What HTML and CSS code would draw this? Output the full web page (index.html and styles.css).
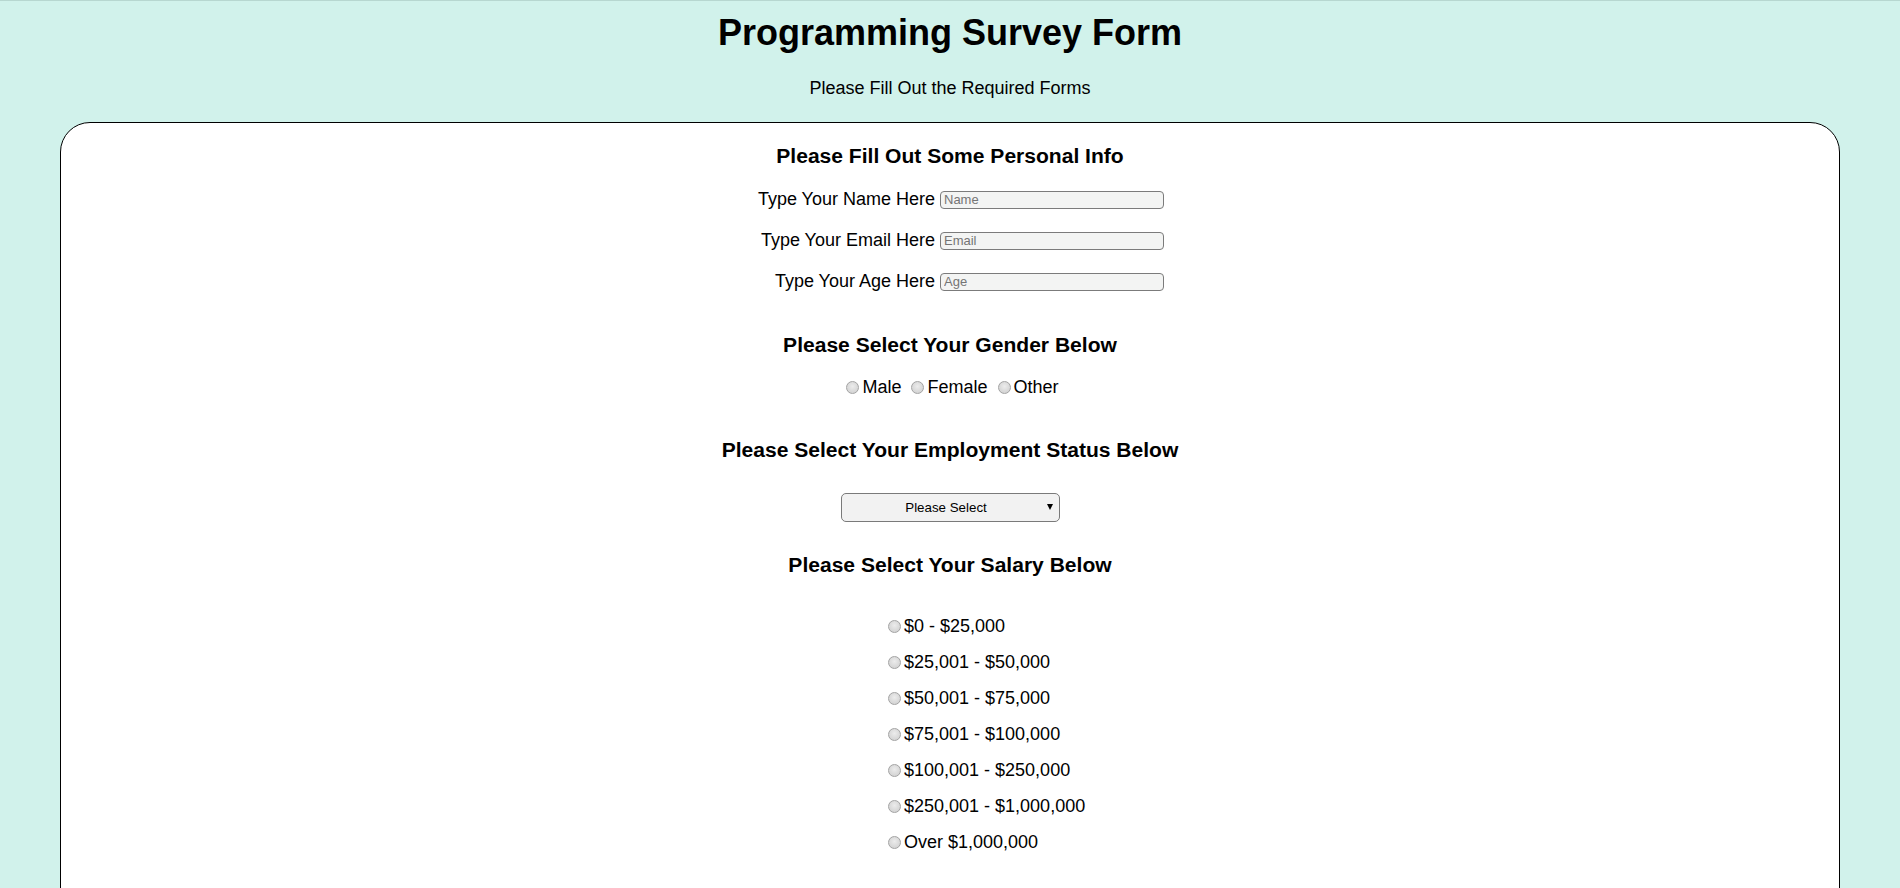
FILE: index.html
```html
<!DOCTYPE html>
<html lang="en">
<head>
<meta charset="utf-8">
<title>Programming Survey Form</title>
<link rel="stylesheet" href="styles.css">
</head>
<body>
<header class="page-header">
  <h1 class="title">Programming Survey Form</h1>
  <p class="subtitle">Please Fill Out the Required Forms</p>
</header>
<form class="card">
  <h3 class="section-title first">Please Fill Out Some Personal Info</h3>
  <div class="field-row">
    <label class="field-label" for="name">Type Your Name Here</label>
    <input class="text-input" id="name" type="text" placeholder="Name">
  </div>
  <div class="field-row">
    <label class="field-label" for="email">Type Your Email Here</label>
    <input class="text-input" id="email" type="email" placeholder="Email">
  </div>
  <div class="field-row">
    <label class="field-label" for="age">Type Your Age Here</label>
    <input class="text-input" id="age" type="number" placeholder="Age">
  </div>

  <h3 class="section-title gender-title">Please Select Your Gender Below</h3>
  <div class="radio-row">
    <input class="radio" type="radio" name="gender" id="male"><label class="radio-label" for="male">Male</label>
    <input class="radio" type="radio" name="gender" id="female"><label class="radio-label" for="female">Female</label>
    <input class="radio" type="radio" name="gender" id="other"><label class="radio-label" for="other">Other</label>
  </div>

  <h3 class="section-title employ-title">Please Select Your Employment Status Below</h3>
  <div class="select-row">
    <span class="select-wrap">
      <select class="select">
        <option>Please Select</option>
        <option>Employed</option>
        <option>Unemployed</option>
        <option>Student</option>
      </select>
    </span>
  </div>

  <h3 class="section-title salary-title">Please Select Your Salary Below</h3>
  <div class="salary-list">
    <div class="salary-item"><input class="radio" type="radio" name="salary" id="s1"><label for="s1">$0 - $25,000</label></div>
    <div class="salary-item"><input class="radio" type="radio" name="salary" id="s2"><label for="s2">$25,001 - $50,000</label></div>
    <div class="salary-item"><input class="radio" type="radio" name="salary" id="s3"><label for="s3">$50,001 - $75,000</label></div>
    <div class="salary-item"><input class="radio" type="radio" name="salary" id="s4"><label for="s4">$75,001 - $100,000</label></div>
    <div class="salary-item"><input class="radio" type="radio" name="salary" id="s5"><label for="s5">$100,001 - $250,000</label></div>
    <div class="salary-item"><input class="radio" type="radio" name="salary" id="s6"><label for="s6">$250,001 - $1,000,000</label></div>
    <div class="salary-item"><input class="radio" type="radio" name="salary" id="s7"><label for="s7">Over $1,000,000</label></div>
  </div>
</form>
</body>
</html>
```
FILE: styles.css
```css
html, body {
  margin: 0;
  padding: 0;
}
body {
  background: #d1f2eb;
  border-top: 1px solid #b7d7d0;
  font-family: "Liberation Sans", Arial, sans-serif;
  font-size: 18px;
  color: #000;
}
.page-header {
  text-align: center;
}
.title {
  font-size: 36px;
  font-weight: bold;
  margin: 10.6px 0 0;
}
.subtitle {
  margin: 24.3px 0 23px;
}
.card {
  display: block;
  margin: 0 60px;
  background: #fff;
  border: 1px solid #000;
  border-radius: 30px;
  padding: 0 0 80px;
  text-align: center;
}
.section-title {
  font-size: 21.06px;
  font-weight: bold;
  margin: 0;
}
.section-title.first { margin-top: 21px; margin-bottom: 19.8px; }
.gender-title { margin-top: 40.7px; margin-bottom: 19.4px; }
.employ-title { margin-top: 40.7px; margin-bottom: 31.1px; }
.salary-title { margin-top: 30.7px; margin-bottom: 31.7px; }

.field-row {
  display: flex;
  justify-content: center;
  align-items: center;
  height: 23px;
  margin-bottom: 18px;
}
.field-row:last-of-type { margin-bottom: 0; }
.field-label {
  width: 199px;
  text-align: right;
  margin-right: 5px;
}
.text-input {
  box-sizing: border-box;
  width: 224px;
  height: 18px;
  margin: 1px 0 0;
  padding: 0 3px;
  border: 1px solid #7b7b7b;
  border-radius: 4px;
  background: #f3f4f3;
  font-family: "Liberation Sans", Arial, sans-serif;
  font-size: 13px;
  color: #000;
  outline: none;
}
.text-input::placeholder { color: #757575; }

.radio {
  -webkit-appearance: none;
  appearance: none;
  box-sizing: border-box;
  width: 13px;
  height: 13px;
  margin: 0 3px 0 5px;
  border: 1px solid #a3a3a3;
  border-radius: 50%;
  background: radial-gradient(circle at 50% 40%, #ececec 0%, #dadada 55%, #cfcfcf 100%);
  flex: none;
}
.radio-row {
  display: flex;
  justify-content: center;
  align-items: center;
  height: 20.7px;
}
.radio-label { margin-right: 5px; }
.radio-label:last-of-type { margin-right: 0; }

.select-row {
  display: flex;
  justify-content: center;
}
.select-wrap {
  position: relative;
  display: inline-block;
}
.select {
  -webkit-appearance: none;
  appearance: none;
  box-sizing: border-box;
  width: 219px;
  height: 29px;
  margin: 0;
  padding: 0 18px 0 10px;
  border: 1px solid #7a7a7a;
  border-radius: 5px;
  background: #f2f2f2;
  font-family: "Liberation Sans", Arial, sans-serif;
  font-size: 13.33px;
  color: #000;
  text-align: center;
  text-align-last: center;
  outline: none;
}
.select-wrap::after {
  content: "";
  position: absolute;
  right: 7px;
  top: 11px;
  border-left: 3.5px solid transparent;
  border-right: 3.5px solid transparent;
  border-top: 6px solid #000;
  pointer-events: none;
}

.salary-list {
  width: 134px;
  margin: 0 auto;
  text-align: left;
  white-space: nowrap;
}
.salary-item {
  display: flex;
  align-items: center;
  height: 36px;
}
```
